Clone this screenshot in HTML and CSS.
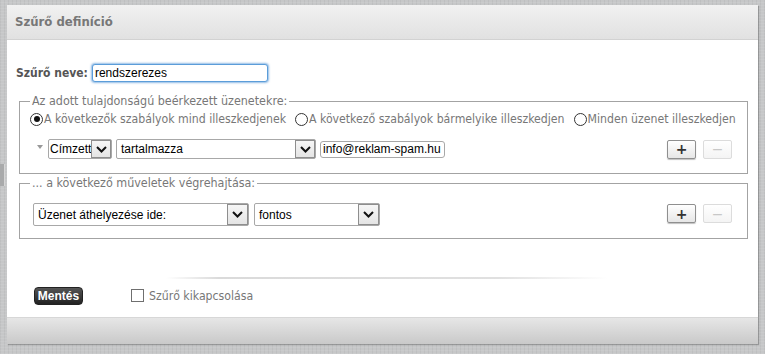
FILE: index.html
```html
<!DOCTYPE html>
<html lang="hu">
<head>
    <meta charset="UTF-8">
    <title>Szűrő definíció</title>
    <link rel="stylesheet" href="styles.css">
</head>
<body>
    <div class="grip"></div>
    <div class="panel">
        <div class="panel-head">Szűrő definíció</div>

        <div class="panel-body">
            <div class="name-row">
                <label for="filter-name">Szűrő neve:</label>
                <input type="text" id="filter-name" class="name-input" value="rendszerezes">
            </div>

            <fieldset class="box">
                <legend>Az adott tulajdonságú beérkezett üzenetekre:</legend>
                <div class="radio-row">
                    <label class="radio"><input type="radio" name="match" checked>A következők szabályok mind illeszkedjenek</label>
                    <label class="radio"><input type="radio" name="match">A következő szabályok bármelyike illeszkedjen</label>
                    <label class="radio"><input type="radio" name="match">Minden üzenet illeszkedjen</label>
                </div>
                <div class="rule-row">
                    <span class="tri"></span>
                    <div class="select sel-header">
                        <span class="sel-text">Címzett</span>
                        <span class="sel-arrow"><svg width="11" height="7" viewBox="0 0 11 7"><path d="M1 1l4.5 4.5L10 1" fill="none" stroke="#111" stroke-width="2"/></svg></span>
                    </div>
                    <div class="select sel-op">
                        <span class="sel-text">tartalmazza</span>
                        <span class="sel-arrow"><svg width="11" height="7" viewBox="0 0 11 7"><path d="M1 1l4.5 4.5L10 1" fill="none" stroke="#111" stroke-width="2"/></svg></span>
                    </div>
                    <input type="text" class="value-input" value="info@reklam-spam.hu">
                    <div class="row-buttons">
                        <button class="btn-small">+</button>
                        <button class="btn-small" disabled>&minus;</button>
                    </div>
                </div>
            </fieldset>

            <fieldset class="box box-actions">
                <legend>... a következő műveletek végrehajtása:</legend>
                <div class="rule-row action-row">
                    <div class="select sel-action">
                        <span class="sel-text">Üzenet áthelyezése ide:</span>
                        <span class="sel-arrow"><svg width="11" height="7" viewBox="0 0 11 7"><path d="M1 1l4.5 4.5L10 1" fill="none" stroke="#111" stroke-width="2"/></svg></span>
                    </div>
                    <div class="select sel-folder">
                        <span class="sel-text">fontos</span>
                        <span class="sel-arrow"><svg width="11" height="7" viewBox="0 0 11 7"><path d="M1 1l4.5 4.5L10 1" fill="none" stroke="#111" stroke-width="2"/></svg></span>
                    </div>
                    <div class="row-buttons">
                        <button class="btn-small">+</button>
                        <button class="btn-small" disabled>&minus;</button>
                    </div>
                </div>
            </fieldset>

            <div class="separator"></div>

            <div class="footer-row">
                <button class="btn-save">Mentés</button>
                <label class="check"><input type="checkbox">Szűrő kikapcsolása</label>
            </div>
        </div>

        <div class="panel-foot"></div>
    </div>
</body>
</html>
```

FILE: styles.css
```css
html, body {
    margin: 0;
    padding: 0;
}
body {
    background-color: #c6c7c8;
    background-image:
        repeating-linear-gradient(0deg, rgba(255,255,255,0.08) 0 1px, transparent 1px 3px),
        repeating-linear-gradient(90deg, rgba(0,0,0,0.04) 0 1px, transparent 1px 4px);
    font-family: "DejaVu Sans Condensed", "DejaVu Sans", sans-serif;
    font-size: 12px;
    color: #777;
    height: 354px;
    overflow: hidden;
    position: relative;
}
.grip {
    position: absolute;
    left: 0;
    top: 164px;
    width: 4px;
    height: 22px;
    background: #a9aaab;
    border-right: 1px solid #d6d6d6;
}
.panel {
    margin: 5px 0 0 7px;
    width: 751px;
    height: 339px;
    display: flex;
    flex-direction: column;
    box-shadow: 1px 1px 1px rgba(0,0,0,0.25);
}
.panel-head {
    height: 34px;
    line-height: 34px;
    padding-left: 8px;
    background: linear-gradient(#f1f1f1, #e1e1e1);
    border-bottom: 1px solid #d2d2d2;
    font-size: 13px;
    font-weight: bold;
    color: #777;
}
.panel-body {
    flex: 1;
    background: #fff;
    padding: 24px 10px 0 9px;
}
.panel-foot {
    height: 26px;
    border-top: 1px solid #d7d7d7;
    background: linear-gradient(#e6e6e6, #c9c9c9);
}

.name-row {
    display: flex;
    align-items: center;
    gap: 4px;
    height: 18px;
}
.name-row label {
    font-weight: bold;
    font-size: 12px;
    color: #555;
}
.name-input {
    width: 170px;
    height: 14px;
    padding: 1px 2px;
    border: 1px solid #5b9dd9;
    border-radius: 3px;
    box-shadow: 0 0 2px 1px rgba(70,140,210,0.6);
    font-family: "Liberation Sans", Arial, sans-serif;
    font-size: 12px;
    color: #000;
    outline: none;
}

.box {
    margin: 12px 0 0 3px;
    padding: 0 10px 14px 10px;
    border: 1px solid #a3a3a3;
}
.box legend {
    padding: 0 2px;
    margin-left: 0;
    font-size: 12.4px;
    line-height: 14px;
    color: #777;
}
.box-actions {
    margin-top: 2px;
    padding-bottom: 12px;
}

.radio-row {
    display: flex;
    gap: 9px;
    margin-top: 2px;
    height: 18px;
    align-items: center;
    font-size: 12.2px;
}
.radio {
    display: flex;
    align-items: center;
    white-space: nowrap;
}
.radio input {
    appearance: none;
    width: 13px;
    height: 13px;
    margin: 0 1px 0 0;
    border: 1px solid #333;
    border-radius: 50%;
    background: #fff;
    position: relative;
}
.radio input:checked::after {
    content: "";
    position: absolute;
    left: 2.5px;
    top: 2.5px;
    width: 6px;
    height: 6px;
    border-radius: 50%;
    background: #111;
}

.rule-row {
    display: flex;
    align-items: center;
    margin-top: 11px;
    height: 20px;
}
.tri {
    width: 0;
    height: 0;
    border-left: 3px solid transparent;
    border-right: 3px solid transparent;
    border-top: 4px solid #999;
    margin: 0 5px 5px 7px;
}
.select {
    display: flex;
    align-items: center;
    box-sizing: border-box;
    height: 20px;
    border: 1px solid #a8a8a8;
    border-radius: 2px;
    background: #fff;
    font-family: "Liberation Sans", Arial, sans-serif;
    font-size: 12px;
    color: #000;
    margin-right: 4px;
}
.sel-text {
    flex: 1;
    padding-left: 4px;
    white-space: nowrap;
}
.sel-arrow {
    box-sizing: border-box;
    width: 20px;
    height: 18px;
    border: 1px solid #8e8e8e;
    background: linear-gradient(#f6f6f6, #e4e4e4);
    display: flex;
    align-items: center;
    justify-content: center;
}
.sel-header { width: 64px; }
.sel-header .sel-text { padding-left: 1px; }
.sel-op { width: 200px; }
.value-input {
    width: 119px;
    height: 15px;
    padding: 0 2px;
    border: 1px solid #a8a8a8;
    border-radius: 3px;
    font-family: "Liberation Sans", Arial, sans-serif;
    font-size: 12px;
    color: #000;
}
.row-buttons {
    margin-left: auto;
    display: flex;
    gap: 7px;
    margin-right: 5px;
}
.btn-small {
    width: 29px;
    height: 19px;
    padding: 0;
    border: 1px solid #8f8f8f;
    border-radius: 2px;
    background: linear-gradient(#ffffff, #e6e6e6);
    box-shadow: 0 1px 1px rgba(0,0,0,0.25);
    font-family: "DejaVu Sans", sans-serif;
    font-size: 14px;
    font-weight: bold;
    line-height: 16px;
    color: #333;
}
.btn-small:disabled {
    border-color: #dcdcdc;
    box-shadow: none;
    background: linear-gradient(#ffffff, #f4f4f4);
    color: #c8c8c8;
    font-weight: normal;
}

.action-row {
    margin-top: 13px;
    margin-left: 3px;
    height: 23px;
}
.action-row .select {
    height: 23px;
    margin-right: 5px;
}
.action-row .sel-arrow {
    height: 21px;
    width: 21px;
}
.sel-action { width: 216px; }
.sel-folder { width: 126px; }
.action-row .row-buttons { margin-top: -2px; }

.separator {
    height: 2px;
    margin: 38px 140px 0 150px;
    background: linear-gradient(to right, rgba(220,220,220,0), #dadada 12%, #e0e0e0 75%, rgba(230,230,230,0));
}

.footer-row {
    display: flex;
    align-items: center;
    margin-top: 7px;
    padding-left: 18px;
    height: 19px;
}
.btn-save {
    width: 49px;
    height: 18px;
    padding: 0;
    border: 1px solid #222;
    border-radius: 4px;
    background: linear-gradient(#555, #222);
    font-family: "Liberation Sans", Arial, sans-serif;
    font-size: 12px;
    font-weight: bold;
    color: #fff;
}
.check {
    display: flex;
    align-items: center;
    margin-left: 48px;
    font-size: 12.2px;
    color: #777;
}
.check input {
    appearance: none;
    width: 13px;
    height: 13px;
    margin: 0 5px 0 0;
    border: 1px solid #6f6f6f;
    background: #fff;
}
```
